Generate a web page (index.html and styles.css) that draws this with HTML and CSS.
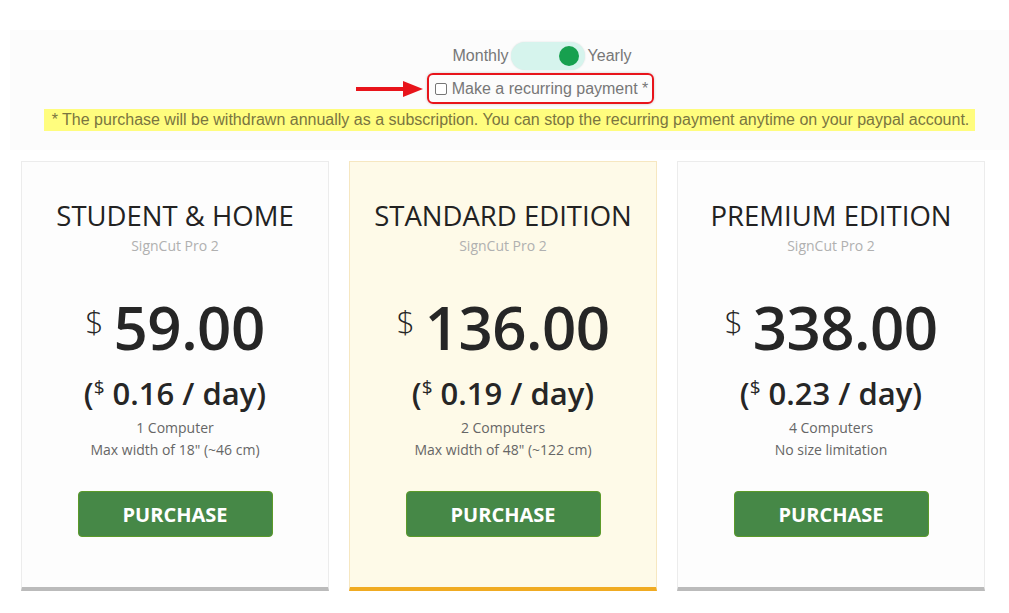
FILE: index.html
```html
<!DOCTYPE html>
<html>
<head>
<meta charset="utf-8">
<link rel="stylesheet" href="styles.css">
</head>
<body>
<div class="page">
  <section class="banner">
    <div class="toggle-row">
      <span class="tlabel">Monthly</span>
      <span class="switch"><span class="knob"></span></span>
      <span class="tlabel">Yearly</span>
    </div>
    <div class="recurring-row">
      <svg class="arrow" width="70" height="20" viewBox="0 0 70 20">
        <line x1="1" y1="10" x2="52" y2="10" stroke="#e8141b" stroke-width="4"/>
        <polygon points="48,2 68,10 48,18" fill="#e8141b"/>
      </svg>
      <label class="recurring">
        <span class="cb"></span>
        <span>Make a recurring payment *</span>
      </label>
    </div>
    <div class="note"><span class="hl">* The purchase will be withdrawn annually as a subscription. You can stop the recurring payment anytime on your paypal account.</span></div>
  </section>

  <section class="cards">
    <div class="card">
      <h2 class="title">STUDENT &amp; HOME</h2>
      <div class="sub">SignCut Pro 2</div>
      <div class="price"><span class="cur">$</span><span class="amt">59.00</span></div>
      <div class="daily">(<sup>$</sup> 0.16 / day)</div>
      <div class="feat">1 Computer</div>
      <div class="feat">Max width of 18" (~46 cm)</div>
      <button class="buy">PURCHASE</button>
    </div>
    <div class="card featured">
      <h2 class="title">STANDARD EDITION</h2>
      <div class="sub">SignCut Pro 2</div>
      <div class="price"><span class="cur">$</span><span class="amt">136.00</span></div>
      <div class="daily">(<sup>$</sup> 0.19 / day)</div>
      <div class="feat">2 Computers</div>
      <div class="feat">Max width of 48" (~122 cm)</div>
      <button class="buy">PURCHASE</button>
    </div>
    <div class="card">
      <h2 class="title">PREMIUM EDITION</h2>
      <div class="sub">SignCut Pro 2</div>
      <div class="price"><span class="cur">$</span><span class="amt">338.00</span></div>
      <div class="daily">(<sup>$</sup> 0.23 / day)</div>
      <div class="feat">4 Computers</div>
      <div class="feat">No size limitation</div>
      <button class="buy">PURCHASE</button>
    </div>
  </section>
</div>
</body>
</html>
```

FILE: styles.css
```css
* { box-sizing: border-box; }
html, body { margin: 0; padding: 0; background: #fff; }
body { font-family: "Open Sans", "Liberation Sans", sans-serif; overflow: hidden; }

.page { padding-top: 30px; }

.banner {
  margin-left: 10px;
  background: #fcfcfc;
  height: 120px;
  padding-top: 12px;
  font-family: "Liberation Sans", Arial, sans-serif;
  color: #777;
  font-size: 16px;
}

.toggle-row {
  display: flex;
  justify-content: center;
  align-items: center;
  height: 28px;
  margin-left: 65px;
}
.tlabel { line-height: 28px; }
.switch {
  width: 74px;
  height: 28px;
  border-radius: 14px;
  background: #d6f4ed;
  box-shadow: 0 0 2px rgba(0,0,0,0.12);
  display: flex;
  align-items: center;
  justify-content: flex-end;
  padding-right: 6px;
  margin: 0 3px 0 2px;
}
.knob {
  width: 20px;
  height: 20px;
  border-radius: 50%;
  background: #17a04f;
}

.recurring-row {
  display: flex;
  justify-content: center;
  align-items: center;
  margin-top: 3px;
  margin-left: -10px;
}
.arrow { margin-right: 2px; display: block; }
.recurring {
  display: flex;
  align-items: center;
  height: 31px;
  padding: 0 4px 0 6px;
  border: 2px solid #e8141b;
  border-radius: 6px;
  box-shadow: 0 0 3px rgba(0,0,0,0.2);
}
.cb {
  width: 12px;
  height: 12px;
  border: 1px solid #767676;
  border-radius: 2px;
  background: #fff;
  margin-right: 5px;
}

.note {
  text-align: center;
  margin-top: 5px;
}
.hl {
  background: #fffd7e;
  color: #7a7540;
  padding: 1px 6px 1px 8px;
  line-height: 20px;
  display: inline-block;
}

.cards {
  display: flex;
  gap: 20px;
  padding-left: 21px;
  margin-top: 11px;
}
.card {
  width: 308px;
  height: 430px;
  background: #fdfdfd;
  border: 1px solid #ececec;
  border-bottom: 4px solid #bbbbbb;
  display: flex;
  flex-direction: column;
  align-items: center;
  padding-top: 35px;
}
.card.featured {
  background: #fefae8;
  border-color: #f6e7c1;
  border-bottom-color: #f0ab22;
}
.title {
  margin: 0;
  font-weight: 400;
  font-size: 27.5px;
  line-height: 38px;
  color: #222;
}
.sub {
  font-size: 14px;
  color: #b0b0b0;
  line-height: 20px;
  margin-top: 1px;
}
.price {
  display: flex;
  align-items: flex-start;
  margin-top: 35px;
  color: #262626;
}
.cur {
  font-size: 32px;
  font-weight: 300;
  line-height: 40px;
  margin-top: 10px;
  margin-right: 10px;
}
.amt {
  font-size: 60px;
  font-weight: 600;
  line-height: 72px;
  letter-spacing: -0.5px;
}
.daily {
  font-size: 31px;
  font-weight: 600;
  color: #262626;
  line-height: 44px;
  margin-top: 8px;
  margin-bottom: 2px;
}
.daily sup {
  font-size: 19px;
  font-weight: 400;
  vertical-align: top;
  position: relative;
  top: -6px;
}
.feat {
  font-size: 14px;
  color: #666;
  line-height: 22px;
}
.buy {
  margin-top: 30px;
  width: 195px;
  height: 46px;
  background: #468847;
  border: 1px solid #5c9a2a;
  border-radius: 4px;
  color: #fff;
  font-family: "Open Sans", sans-serif;
  font-weight: 700;
  font-size: 20px;
}
```
